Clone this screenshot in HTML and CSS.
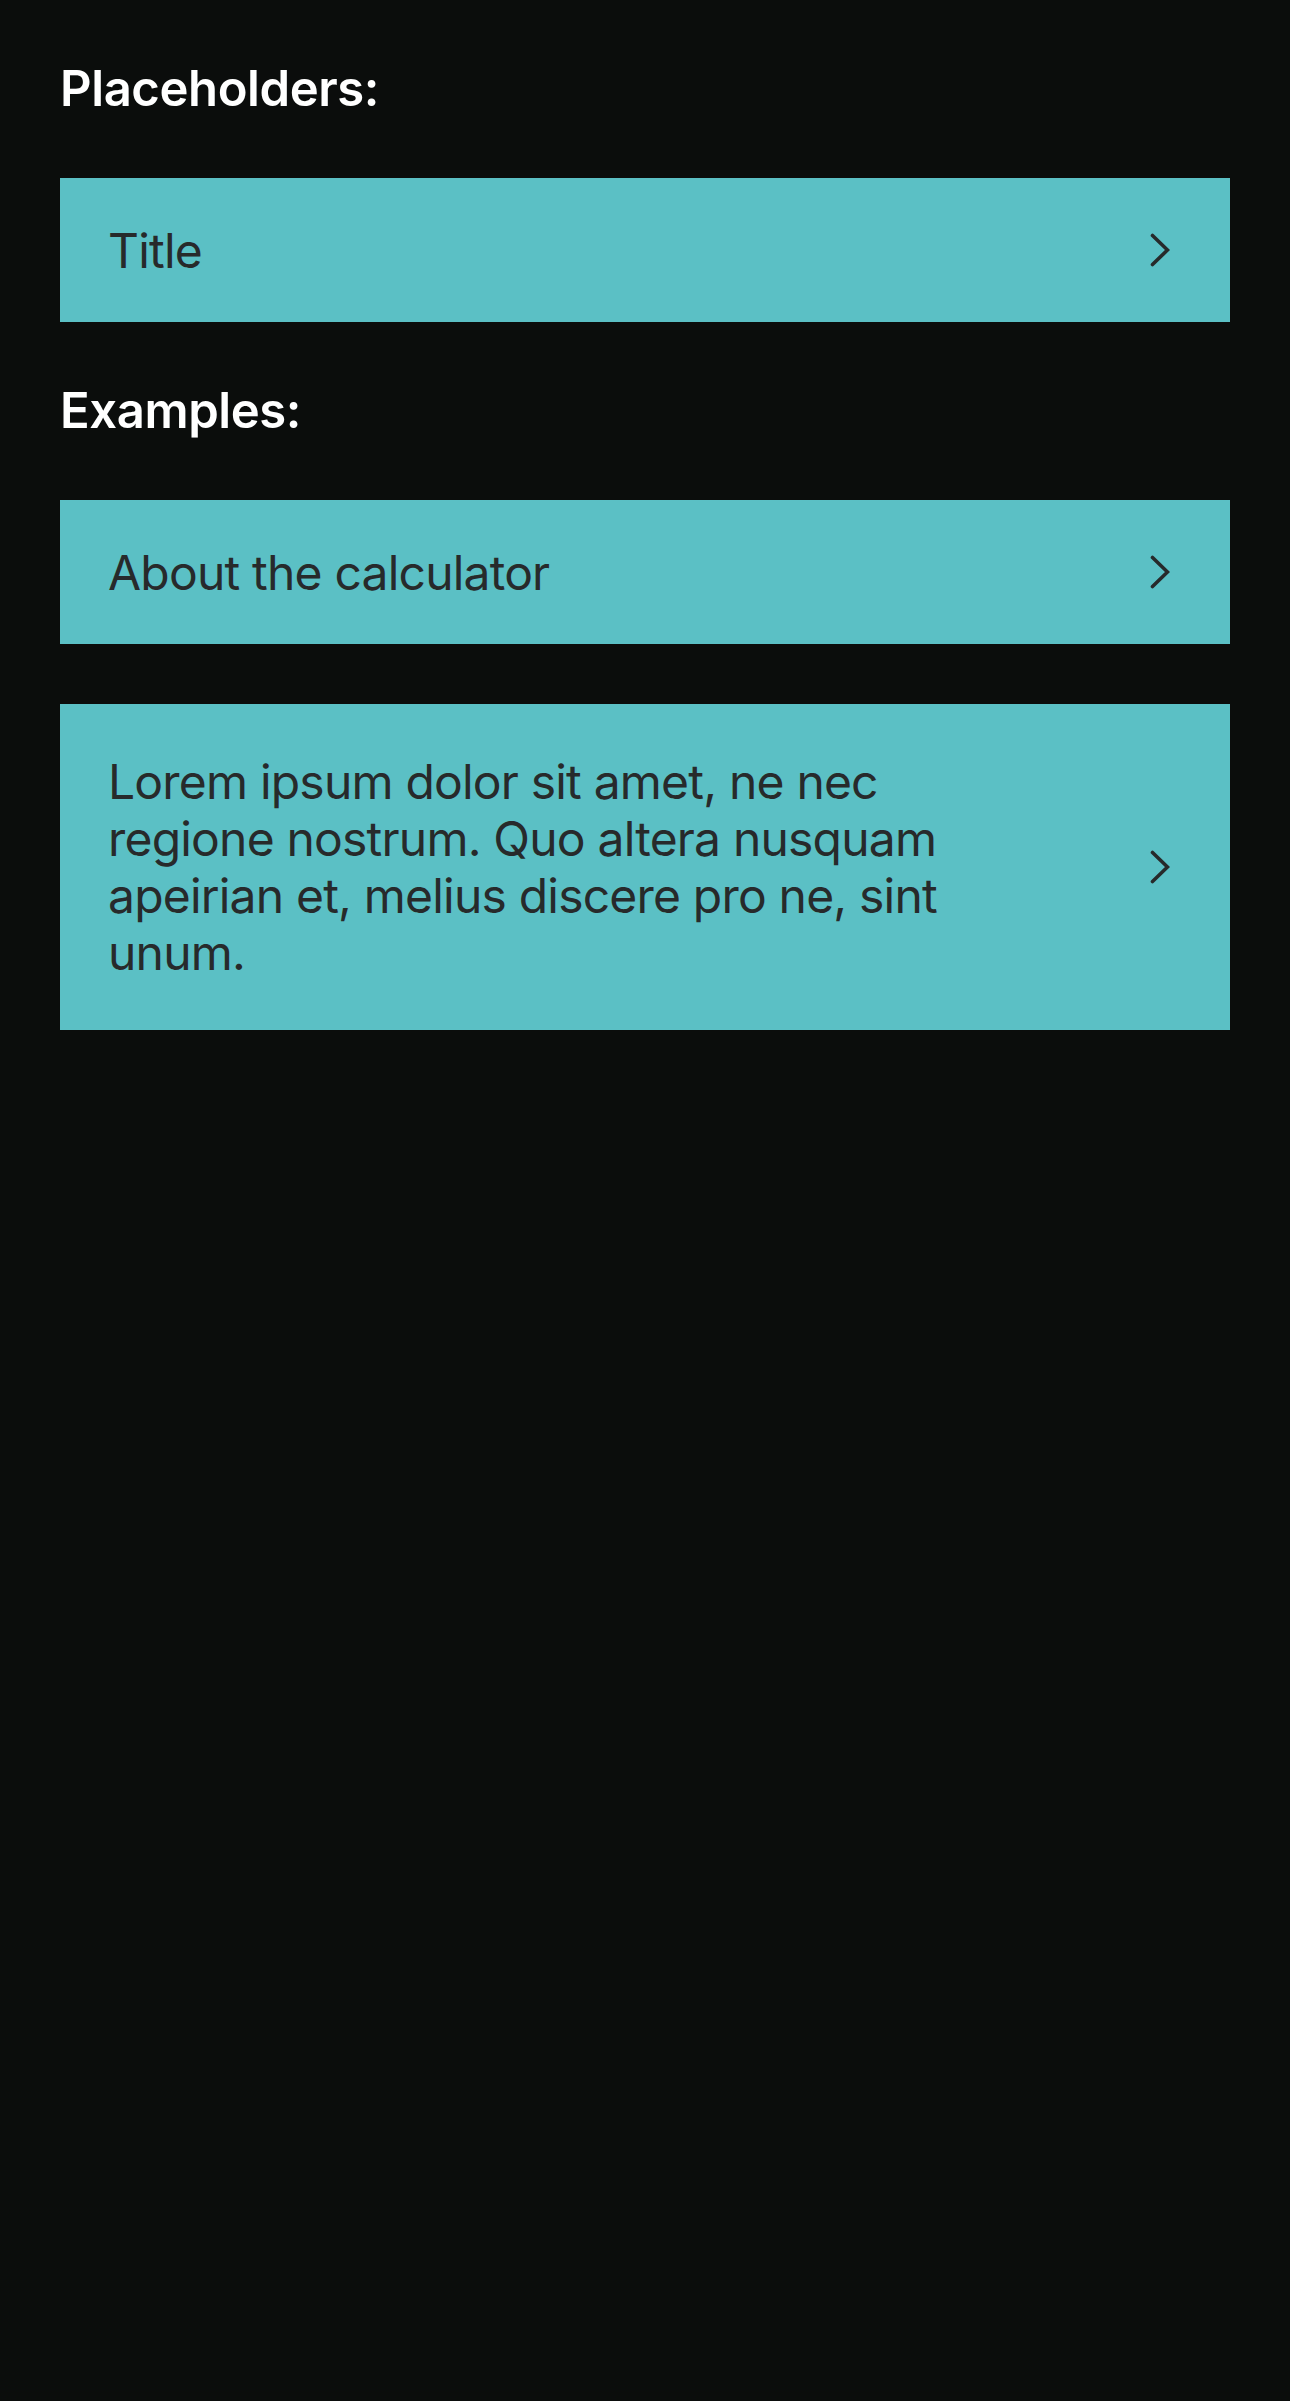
FILE: index.html
```html
<!DOCTYPE html>
<html lang="en">
<head>
<meta charset="utf-8">
<title>Placeholders</title>
<link rel="stylesheet" href="styles.css">
</head>
<body>
<main class="page">
  <h2 class="section-title">Placeholders:</h2>
  <a class="card" href="#">
    <span class="card-text">Title</span>
    <svg class="chevron" viewBox="0 0 20 34" aria-hidden="true"><path d="M2.5 2.5 L17.5 17 L2.5 31.5"/></svg>
  </a>
  <h2 class="section-title">Examples:</h2>
  <a class="card" href="#">
    <span class="card-text">About the calculator</span>
    <svg class="chevron" viewBox="0 0 20 34" aria-hidden="true"><path d="M2.5 2.5 L17.5 17 L2.5 31.5"/></svg>
  </a>
  <a class="card card--multiline" href="#">
    <span class="card-text">Lorem ipsum dolor sit amet, ne nec regione nostrum. Quo altera nusquam apeirian et, melius discere pro ne, sint unum.</span>
    <svg class="chevron" viewBox="0 0 20 34" aria-hidden="true"><path d="M2.5 2.5 L17.5 17 L2.5 31.5"/></svg>
  </a>
</main>
</body>
</html>
```

FILE: styles.css
```css
html, body {
  margin: 0;
  padding: 0;
  background: #0b0d0c;
}

body {
  min-height: 2401px;
  font-family: Inter, "Noto Sans", "Liberation Sans", sans-serif;
}

.page {
  display: flex;
  flex-direction: column;
  gap: 60px;
  padding: 60px 60px 0 60px;
}

.section-title {
  margin: 0;
  color: #ffffff;
  font-size: 49px;
  font-weight: 600;
  line-height: 58px;
  letter-spacing: -0.4px;
}

.card {
  display: flex;
  align-items: center;
  min-height: 144px;
  box-sizing: border-box;
  padding: 0 60px 0 48px;
  background: #5bc0c5;
  color: #272a2b;
  text-decoration: none;
}

.card--multiline {
  padding-top: 49px;
  padding-bottom: 49px;
}

.card-text {
  flex: 1;
  max-width: 880px;
  font-size: 48px;
  font-weight: 400;
  line-height: 57px;
  letter-spacing: -0.8px;
}

.chevron {
  width: 20px;
  height: 34px;
  margin-left: auto;
  flex: none;
}

.chevron path {
  fill: none;
  stroke: #272a2b;
  stroke-width: 3.6;
  stroke-linecap: round;
  stroke-linejoin: miter;
}
```
